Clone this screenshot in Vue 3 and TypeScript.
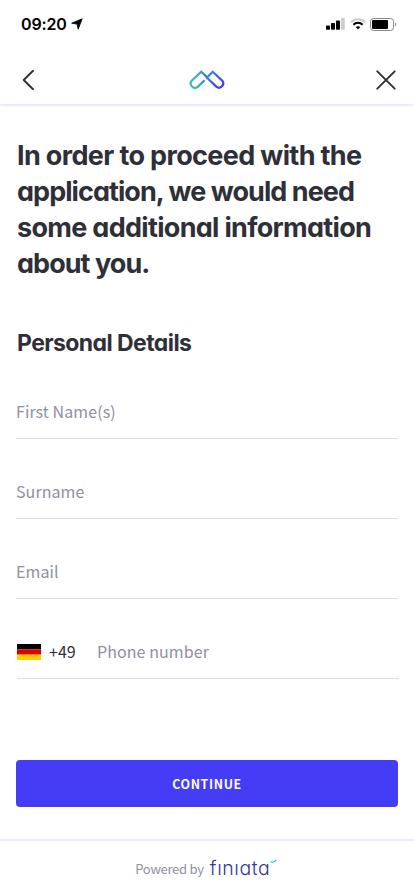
<script setup lang="ts">
import { ref } from 'vue'

interface Line { text: string; spacing: string }

const headline: Line[] = [
  { text: 'In order to proceed with the', spacing: 'l1' },
  { text: 'application, we would need', spacing: 'l2' },
  { text: 'some additional information', spacing: 'l3' },
  { text: 'about you.', spacing: 'l4' },
]

const fields = ref([
  { id: 'first', label: 'First Name(s)', type: 'text', value: '' },
  { id: 'surname', label: 'Surname', type: 'text', value: '' },
  { id: 'email', label: 'Email', type: 'email', value: '' },
])
const phone = ref('')
</script>

<template>
  <div class="screen">
    <div class="status">
      <span class="time">09:20</span>
      <svg class="location" width="12" height="12" viewBox="0 0 12 12"><path d="M11.2.8 7.2 11.2 6 6.1.6 5.2z" fill="#000" stroke="#000" stroke-width=".8" stroke-linejoin="round" /></svg>
      <svg class="signal" width="19" height="12" viewBox="0 0 19 12">
        <rect x="0" y="7.5" width="4" height="4.2" rx=".8" />
        <rect x="5" y="5" width="4" height="6.7" rx=".8" />
        <rect x="10" y="2.4" width="4" height="9.3" rx=".8" />
        <rect x="15" y="0" width="3.8" height="11.7" rx=".8" fill="#ccc" />
      </svg>
      <svg class="wifi" width="16" height="12" viewBox="0 0 16 12" fill="none">
        <path d="M1 4.2C4.8.3 11.2.3 15 4.2" stroke="#ccc" stroke-width="2" />
        <path d="M3.4 6.7C6 4.2 10 4.2 12.6 6.7" stroke="#000" stroke-width="2" />
        <path d="M5.7 9.1C7 8 9 8 10.3 9.1L8 11.5z" fill="#000" />
      </svg>
      <svg class="battery" width="27" height="13" viewBox="0 0 27 13">
        <rect x=".5" y=".5" width="23" height="12" rx="3" fill="none" stroke="#858585" />
        <rect x="2" y="2" width="16" height="9" rx="1" />
        <path d="M25 4.5c1.8.6 1.8 3.4 0 4z" fill="#999" />
      </svg>
    </div>

    <header class="nav">
      <button class="icon-btn" aria-label="Back">
        <svg width="12" height="20" viewBox="0 0 12 20"><path d="M11 .8 1.7 10 11 19.2" fill="none" stroke="#2f2f3a" stroke-width="1.9" stroke-linecap="round" stroke-linejoin="round" /></svg>
      </button>
      <svg class="mark" width="36" height="20" viewBox="0 0 36 20">
        <defs>
          <linearGradient id="mark-left" x1="0" y1="0" x2="1" y2="0"><stop offset="0" stop-color="#36c3b0" /><stop offset=".55" stop-color="#37abc1" /><stop offset="1" stop-color="#3d67dc" /></linearGradient>
          <linearGradient id="mark-right" x1="0" y1="0" x2="1" y2="1"><stop offset="0" stop-color="#379bcc" /><stop offset=".7" stop-color="#4344ee" /><stop offset="1" stop-color="#4338f5" /></linearGradient>
        </defs>
        <path d="M18.2 7.2 12.2 1.8 2.7 10.8C-.4 14.2 4.2 20.3 8.7 16.8L15.5 10.2" fill="none" stroke="url(#mark-left)" stroke-width="2.2" />
        <path d="M17 8.5 23.7 1.8 33.3 10.8C36.2 14.5 31.5 20 27.3 16.6L17.5 7.2" fill="none" stroke="url(#mark-right)" stroke-width="2.2" />
      </svg>
      <button class="icon-btn" aria-label="Close">
        <svg width="20" height="20" viewBox="0 0 20 20"><path d="M1.3 1.3 18.7 18.7M18.7 1.3 1.3 18.7" stroke="#2f2f3a" stroke-width="1.9" stroke-linecap="round" /></svg>
      </button>
    </header>

    <main class="content">
      <h1><span v-for="line in headline" :key="line.text" :class="line.spacing">{{ line.text }}</span></h1>
      <h2>Personal Details</h2>
      <form class="form" @submit.prevent>
        <div v-for="field in fields" :key="field.id" class="field">
          <input v-model="field.value" :type="field.type" :placeholder="field.label" :class="field.id">
        </div>
        <div class="field phone">
          <svg class="flag" width="24" height="16" viewBox="0 0 24 16"><path fill="#000" d="M0 0h24v5.33H0z" /><path fill="#d00" d="M0 5.33h24v5.34H0z" /><path fill="#ffce00" d="M0 10.67h24V16H0z" /></svg>
          <span class="code">+49</span>
          <input v-model="phone" type="tel" placeholder="Phone number">
        </div>
        <button class="continue" type="submit">CONTINUE</button>
      </form>
    </main>

    <footer class="footer">
      <span class="powered">Powered by</span>
      <span class="brand">fınıata<svg class="accent" width="7" height="4" viewBox="0 0 7 4"><path d="M.5 2.7c2.3.8 4.2.4 5.8-1.8" fill="none" stroke="#13d3f3" stroke-width="1.3" /></svg></span>
    </footer>
  </div>
</template>

<style>
body { background: #fff; }
</style>

<style scoped>
* { box-sizing: border-box; }
.screen { width: 100%; height: 896px; display: flex; flex-direction: column; overflow: hidden; background: #fff; font-family: "Noto Sans CJK JP", "Noto Sans", sans-serif; color: #2f2f38; }
.status { height: 50px; display: flex; align-items: center; padding: 0 17px 2px 21px; flex: none; }
.time { font: 600 16px/20px Inter, sans-serif; color: #000; letter-spacing: -.15px; width: 46px; white-space: nowrap; }
.location { margin-left: 4px; }
.signal { margin-left: auto; }
.wifi { margin-left: 5px; }
.battery { margin-left: 4px; }
.nav { height: 54px; flex: none; display: flex; justify-content: space-between; align-items: center; padding: 6px 18px 0 22px; box-shadow: 0 2px 2px #ebebf7; }
.mark { margin-right: 4px; }
.icon-btn { border: 0; background: none; padding: 0; display: flex; width: 20px; }
.content { flex: none; height: 735px; padding: 34px 16px 0; }
h1, h2 { margin: 0; font-family: Inter, sans-serif; font-feature-settings: "cv11"; font-weight: 650; color: #2f2f38; }
h1 { font-size: 27px; line-height: 36px; padding-left: 1px; }
h1 span { display: block; white-space: nowrap; }
.l1 { letter-spacing: -.64px; }
.l2 { letter-spacing: -.94px; }
.l3 { letter-spacing: -.69px; }
.l4 { letter-spacing: -.95px; }
h2 { font-size: 23px; line-height: 28px; letter-spacing: -.58px; padding-left: 1px; margin-top: 47px; }
.form { display: flex; flex-direction: column; margin-top: 22px; }
.field { height: 60px; margin-bottom: 20px; border-bottom: 1px solid #dcdcef; display: flex; align-items: center; padding-top: 4px; }
input { border: 0; outline: 0; padding: 0; min-width: 0; flex: 1; height: 30px; background: transparent; font: 400 16px/30px "Noto Sans CJK JP", "Noto Sans", sans-serif; letter-spacing: .08px; color: #2f2f38; }
input::placeholder { color: #9190a0; opacity: 1; }
.phone { margin-left: 1px; margin-right: -1px; }
.flag { margin-top: 2px; }
.code { font-size: 16px; line-height: 30px; width: 48px; margin-left: 8px; }
.continue { margin-top: 61px; height: 47px; border: 0; border-radius: 4px; background: #453cf5; color: #fff; font: 700 12.4px/20px "Noto Sans CJK JP", "Noto Sans", sans-serif; letter-spacing: .65px; padding: 0; }
.footer { flex: 1; border-top: 2px solid #ededf8; display: flex; justify-content: center; align-items: center; }
.powered { font-size: 13px; line-height: 20px; letter-spacing: -.25px; color: #9190a0; margin-right: 6px; }
.brand { position: relative; font: 350 19.5px/24px Inter, sans-serif; font-feature-settings: "cv11"; letter-spacing: .6px; color: #34389a; width: 67px; margin-right: 2px; margin-top: -1px; }
.accent { position: absolute; right: 0; top: 3px; }
</style>
